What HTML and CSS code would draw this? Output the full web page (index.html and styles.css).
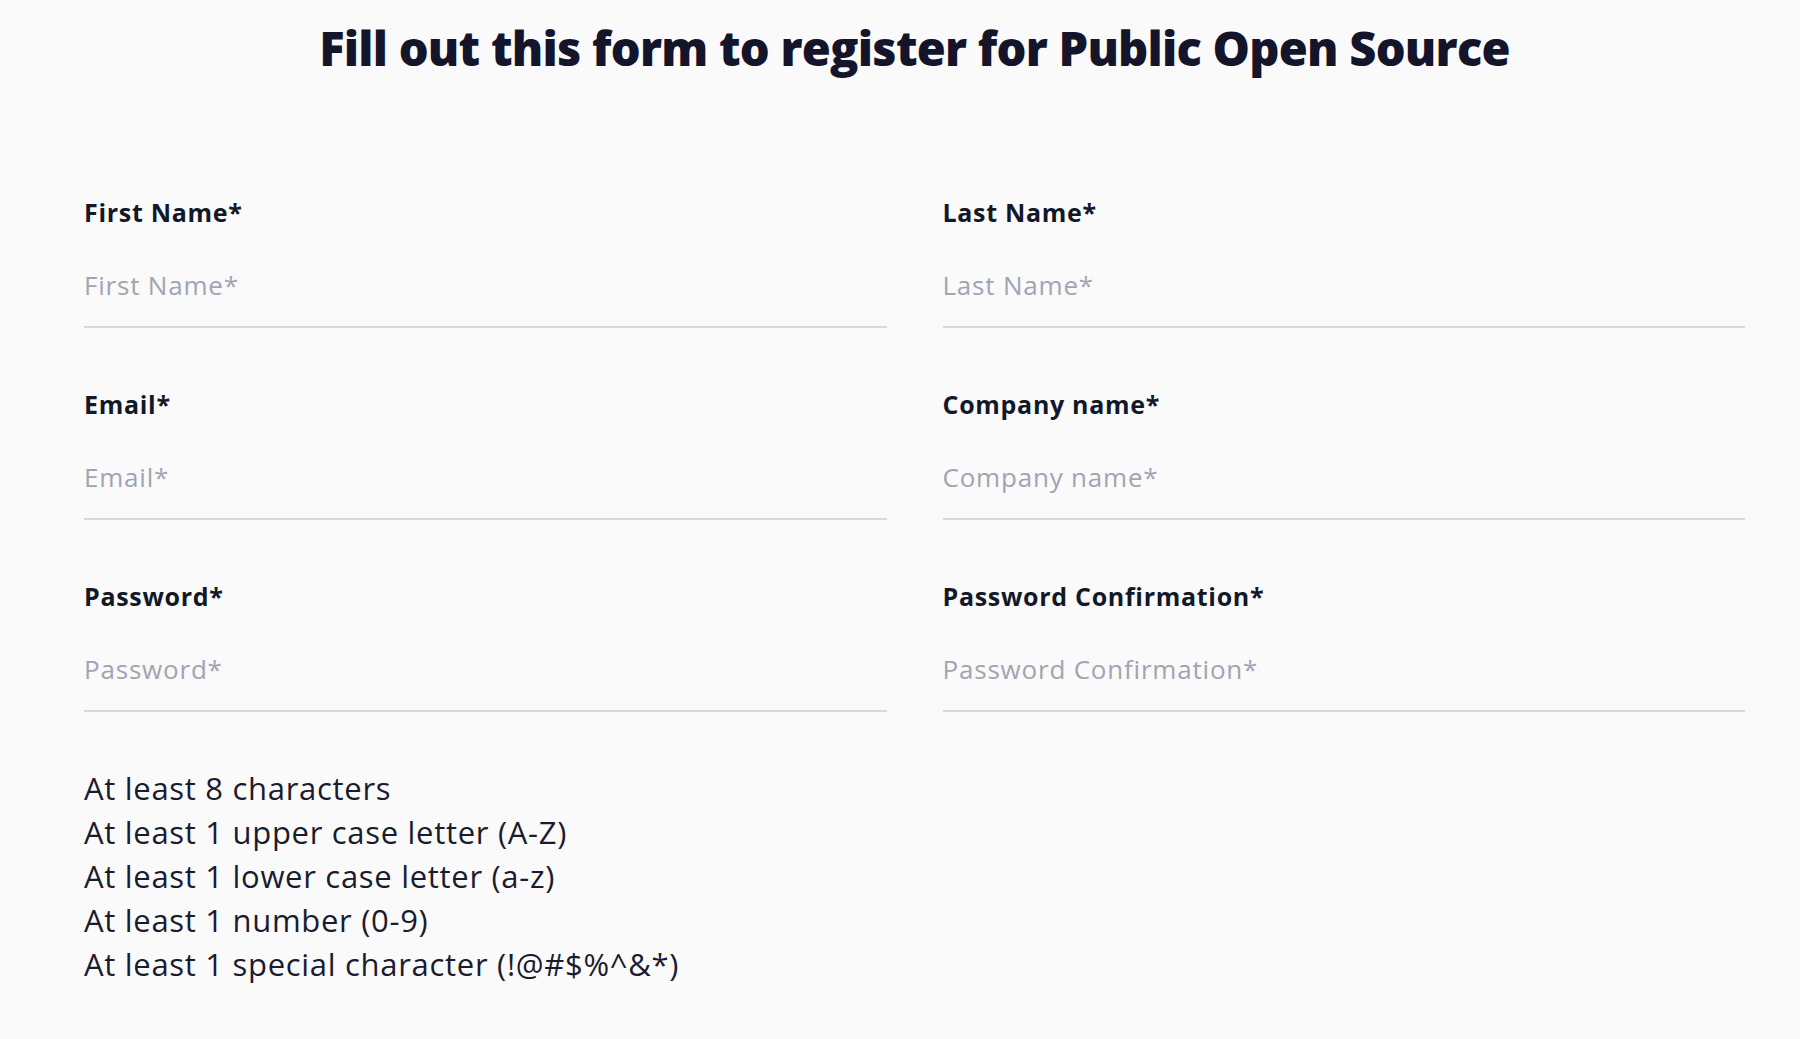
FILE: index.html
```html
<!DOCTYPE html>
<html lang="en">
<head>
<meta charset="utf-8">
<title>Register for Public Open Source</title>
<link rel="stylesheet" href="styles.css">
</head>
<body>
<main class="page">
  <h1 class="title">Fill out this form to register for Public Open Source</h1>
  <form class="form">
    <div class="field">
      <label class="label" for="fn">First Name*</label>
      <input class="input" id="fn" type="text" placeholder="First Name*">
    </div>
    <div class="field">
      <label class="label" for="ln">Last Name*</label>
      <input class="input" id="ln" type="text" placeholder="Last Name*">
    </div>
    <div class="field">
      <label class="label" for="em">Email*</label>
      <input class="input" id="em" type="email" placeholder="Email*">
    </div>
    <div class="field">
      <label class="label" for="co">Company name*</label>
      <input class="input" id="co" type="text" placeholder="Company name*">
    </div>
    <div class="field">
      <label class="label" for="pw">Password*</label>
      <input class="input" id="pw" type="password" placeholder="Password*">
    </div>
    <div class="field">
      <label class="label" for="pc">Password Confirmation*</label>
      <input class="input" id="pc" type="password" placeholder="Password Confirmation*">
    </div>
  </form>
  <ul class="rules">
    <li>At least 8 characters</li>
    <li>At least 1 upper case letter (A-Z)</li>
    <li>At least 1 lower case letter (a-z)</li>
    <li>At least 1 number (0-9)</li>
    <li>At least 1 special character (!@#$%^&amp;*)</li>
  </ul>
</main>
</body>
</html>
```
FILE: styles.css
```css
html, body {
  margin: 0;
  padding: 0;
  background: #fafafb;
}

body {
  font-family: "Open Sans", "Noto Sans", sans-serif;
  color: #161628;
}

.page {
  width: 1661px;
  margin-left: 84px;
}

.title {
  margin: 18px 0 0;
  font-size: 47px;
  line-height: 60px;
  font-weight: 800;
  text-align: center;
  color: #14142a;
  letter-spacing: -0.75px;
}

.form {
  display: grid;
  grid-template-columns: 1fr 1fr;
  column-gap: 56px;
  row-gap: 60px;
  margin-top: 118px;
}

.field {
  display: flex;
  flex-direction: column;
}

.label {
  font-size: 25px;
  line-height: 32px;
  font-weight: 700;
  color: #121828;
  letter-spacing: 0.7px;
}

.input {
  box-sizing: content-box;
  height: 30px;
  padding: 42px 0 26px;
  margin: 0;
  border: none;
  border-bottom: 2px solid #d5d7de;
  background: transparent;
  font-family: inherit;
  font-size: 26px;
  line-height: 30px;
  color: #121828;
  outline: none;
  letter-spacing: 0.8px;
}

.input::placeholder {
  color: #9fa5b2;
  opacity: 1;
}

.rules {
  list-style: none;
  margin: 54px 0 0;
  padding: 0;
  font-size: 31px;
  line-height: 44px;
  color: #1a1c2e;
  letter-spacing: 0.7px;
}
```
